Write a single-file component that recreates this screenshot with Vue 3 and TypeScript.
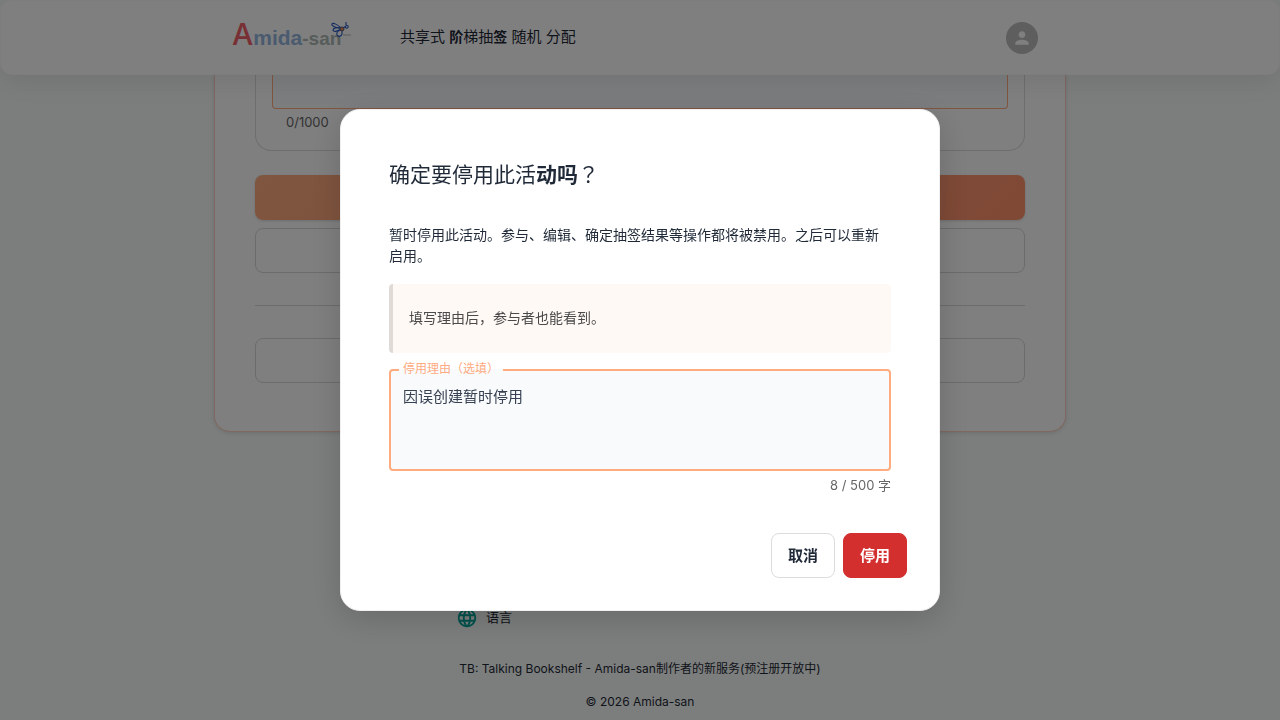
<script setup lang="ts">
import { ref } from 'vue'

const reason = ref('因误创建暂时停用')
const comment = ref('')
const maxLength = 500
</script>

<template>
  <div class="page">
    <header class="header">
      <div class="header-inner">
        <a class="logo" href="#" aria-label="Amida-san">
          <span class="logo-a">A</span><span class="logo-mida">mida</span><span class="logo-san">-san</span>
          <svg class="bee" viewBox="0 0 20 18" width="20" height="18" aria-hidden="true">
            <path d="M12 13h8" stroke="#b8b8b8" fill="none" />
            <g fill="none" stroke="#2a5cc0" stroke-width="1.1" stroke-linejoin="round">
              <path d="M10 6C7 3 2 0 1 2s4 4 9 4Z" />
              <path d="M9 6C6 5 2 6 2 8s4 2 8-1" />
              <path d="M10 8c-3 0-5 3-4 5s4 2 5-1l0-3" />
              <path d="M12 6l3-2m-1 1c1 2 4 1 3-1l-2-1V0" />
            </g>
            <circle cx="11" cy="7" r="2" fill="#f08a48" stroke="#5a5a80" />
          </svg>
        </a>
        <p class="tagline">共享式 <span class="tag-strong">阶</span>梯抽<span class="tag-strong">签</span> 随机 分配</p>
        <button class="avatar" type="button" aria-label="账户">
          <svg viewBox="0 0 24 24" width="20" height="20" aria-hidden="true">
            <path fill="#fff" d="M12 12c2.21 0 4-1.79 4-4s-1.79-4-4-4-4 1.790-4 4 1.790 4 4 4m0 2c-2.670 0-8 1.340-8 4v2h16v-2c0-2.660-5.330-4-8-4" />
          </svg>
        </button>
      </div>
    </header>

    <main class="card">
      <section class="panel">
        <textarea v-model="comment" class="comment" aria-label="备注"></textarea>
        <p class="helper">{{ comment.length }}/1000</p>
      </section>
      <button class="wide primary" type="button" aria-label="保存"></button>
      <button class="wide" type="button" aria-label="返回"></button>
      <hr class="rule" />
      <button class="wide" type="button" aria-label="停用活动"></button>
    </main>

    <footer class="footer">
      <div class="language">
        <svg viewBox="0 0 24 24" width="22" height="22" aria-hidden="true">
          <path fill="#00a39a" d="M11.990 2C6.470 2 2 6.480 2 12s4.470 10 9.990 10C17.520 22 22 17.520 22 12S17.520 2 11.990 2m6.930 6h-2.950c-.32-1.250-.78-2.450-1.380-3.560 1.840.63 3.370 1.910 4.330 3.560M12 4.040c.83 1.200 1.480 2.530 1.910 3.960h-3.820c.43-1.430 1.080-2.760 1.910-3.960M4.260 14C4.100 13.360 4 12.690 4 12s.1-1.360.26-2h3.380c-.08.66-.14 1.320-.14 2s.06 1.340.14 2zm.82 2h2.950c.32 1.250.78 2.450 1.380 3.560-1.840-.63-3.370-1.900-4.330-3.560m2.950-8H5.080c.96-1.660 2.490-2.930 4.330-3.560C8.810 5.550 8.350 6.750 8.030 8M12 19.960c-.83-1.200-1.480-2.530-1.910-3.960h3.820c-.43 1.430-1.080 2.760-1.910 3.960M14.340 14H9.660c-.09-.66-.16-1.320-.16-2s.07-1.350.16-2h4.680c.09.65.16 1.320.16 2s-.07 1.340-.16 2m.25 5.560c.6-1.110 1.060-2.310 1.380-3.560h2.950c-.96 1.650-2.490 2.930-4.330 3.560M16.360 14c.08-.66.14-1.320.14-2s-.06-1.340-.14-2h3.380c.16.64.26 1.310.26 2s-.1 1.360-.26 2z" />
        </svg>
        <span>语言</span>
      </div>
      <a class="foot-line" href="#">TB: Talking Bookshelf - Amida-san制作者的新服务(预注册开放中)</a>
      <p class="foot-line">© 2026 Amida-san</p>
    </footer>

    <div class="overlay">
      <div class="dialog" role="dialog" aria-modal="true" aria-labelledby="dialog-title">
        <h2 id="dialog-title" class="title">确定要停用此活<strong>动吗</strong><span class="mark">？</span></h2>
        <p class="text">暂时停用此活动。参与、编辑、确定抽签结果等操作都将被禁用。之后可以重新启用。</p>
        <p class="note">填写理由后，参与者也能看到。</p>
        <div class="field">
          <label class="field-label" for="reason">停用理由（选填）</label>
          <textarea id="reason" v-model="reason" class="reason" :maxlength="maxLength"></textarea>
        </div>
        <p class="counter">{{ reason.length }} / {{ maxLength }} 字</p>
        <div class="actions">
          <button class="action" type="button">取消</button>
          <button class="action danger" type="button">停用</button>
        </div>
      </div>
    </div>
  </div>
</template>

<style>
body {
  margin: 0;
  background: #f8fcfa;
}
</style>

<style scoped>
* {
  box-sizing: border-box;
}
.page {
  min-height: 100vh;
  font-family: Inter, "Noto Sans CJK SC", sans-serif;
  color: #1f2937;
}
p,
h2 {
  margin: 0;
}
button,
textarea {
  font-family: inherit;
}
.header {
  position: relative;
  height: 75px;
  padding: 0 24px;
  background: #fff;
  border: 1px solid #fafafa;
  border-radius: 12px;
  box-shadow: 0 8px 24px rgba(0, 0, 0, 0.08);
}
.header-inner {
  display: flex;
  align-items: center;
  height: 100%;
  max-width: 816px;
  margin: 0 auto;
}
.logo {
  position: relative;
  display: flex;
  align-items: baseline;
  width: 168px;
  padding-bottom: 2px;
  line-height: 40px;
  text-decoration: none;
  font-family: "Liberation Sans", Arial, sans-serif;
  font-weight: 700;
}
.logo-a {
  font-family: Inter, sans-serif;
  font-size: 30px;
  font-weight: 500;
  color: #f0606a;
}
.logo-mida {
  font-size: 21px;
  color: #94b4de;
}
.logo-san {
  font-size: 19px;
  color: #adb8b4;
}
.bee {
  position: absolute;
  left: 99px;
  top: 8px;
}
.tagline {
  flex: 1;
  padding-bottom: 2px;
  font-size: 15px;
  line-height: 24px;
}
.tag-strong {
  font-size: 14px;
  font-weight: 700;
}
.avatar {
  display: flex;
  align-items: center;
  justify-content: center;
  width: 32px;
  height: 32px;
  margin-right: 10px;
  padding: 0;
  border: 0;
  border-radius: 50%;
  background: #bdbdbd;
}
.card {
  max-width: 852px;
  margin: 0 auto;
  padding: 0 40px 48px;
  background: #fff;
  border: 1px solid #ffd0c0;
  border-top: 0;
  border-radius: 0 0 16px 16px;
  box-shadow: 0 1px 4px rgba(0, 0, 0, 0.12);
}
.panel {
  padding: 0 16px 18px;
  margin-bottom: 24px;
  border: 1px solid #dcdcdc;
  border-top: 0;
  border-radius: 0 0 16px 16px;
}
.comment {
  display: block;
  width: 100%;
  height: 34px;
  background: #f8fafc;
  border: 1px solid #ffab7f;
  border-top: 0;
  border-radius: 0 0 4px 4px;
  resize: none;
}
.helper {
  padding: 3px 14px 0;
  font-size: 13px;
  line-height: 20px;
  color: #666;
}
.wide {
  display: block;
  width: 100%;
  height: 45px;
  margin-bottom: 8px;
  background: #fff;
  border: 1px solid #d8d8d8;
  border-radius: 8px;
}
.wide:last-child {
  margin-bottom: 0;
}
.primary {
  border: 0;
  background: linear-gradient(135deg, #ffac7f, #ff926c);
  box-shadow: 0 1px 3px rgba(0, 0, 0, 0.15);
}
.rule {
  margin: 32px 0;
  border: 0;
  border-top: 1px solid #d8d8d8;
}
.footer {
  display: flex;
  flex-direction: column;
  align-items: center;
  gap: 13px;
  padding-top: 174px;
}
.language {
  display: flex;
  align-items: center;
  gap: 8px;
  width: 368px;
  height: 24px;
  margin-bottom: 16px;
  font-size: 13px;
  line-height: 20px;
}
.language span {
  padding-bottom: 2px;
}
.foot-line {
  font-size: 12px;
  line-height: 20px;
  color: #1f2937;
  text-decoration: none;
}
.overlay {
  position: fixed;
  inset: 0;
  display: flex;
  align-items: center;
  justify-content: center;
  background: rgba(0, 0, 0, 0.5);
}
.dialog {
  width: 600px;
  max-width: calc(100% - 64px);
  padding: 48px;
  padding-bottom: 32px;
  background: #fff;
  border: 1px solid #f0f0f0;
  border-radius: 20px;
  box-shadow: 0 8px 32px rgba(0, 0, 0, 0.16);
}
.title {
  margin-bottom: 33px;
  font-size: 21px;
  line-height: 33px;
  font-weight: 400;
}
.title strong {
  font-weight: 700;
}
.mark {
  font-family: "Noto Sans CJK TC", sans-serif;
  line-height: 20px;
}
.text {
  font-size: 14px;
  line-height: 21px;
}
.note {
  margin: 18px 0 16px;
  padding: 23px 16px 25px;
  border-left: 4px solid #e0dad6;
  border-radius: 4px;
  background: #fff9f5;
  font-size: 14px;
  line-height: 21px;
  color: #4a4a4a;
}
.field {
  position: relative;
}
.field-label {
  position: absolute;
  top: -10px;
  left: 10px;
  padding: 0 4px;
  background: linear-gradient(#fff 10px, #f8fafc 10px);
  font-size: 12px;
  line-height: 20px;
  color: #ffab7f;
}
.reason {
  display: block;
  width: 100%;
  height: 102px;
  padding: 14px 12px;
  background: #f8fafc;
  border: 2px solid #ffab7f;
  border-radius: 4px;
  outline: none;
  resize: none;
  font-size: 15px;
  line-height: 23px;
  color: #374151;
}
.counter {
  margin-top: 4px;
  text-align: right;
  font-size: 13px;
  line-height: 20px;
  color: #666;
}
.actions {
  display: flex;
  justify-content: flex-end;
  gap: 8px;
  margin: 38px -16px 0 0;
}
.action {
  min-width: 64px;
  height: 45px;
  padding: 0 16px 2px;
  background: #fff;
  border: 1px solid #dcdcdc;
  border-radius: 8px;
  font-size: 15px;
  font-weight: 700;
  color: #1f2937;
}
.danger {
  border-color: #d32f2f;
  background: #d32f2f;
  color: #fff;
}
</style>
